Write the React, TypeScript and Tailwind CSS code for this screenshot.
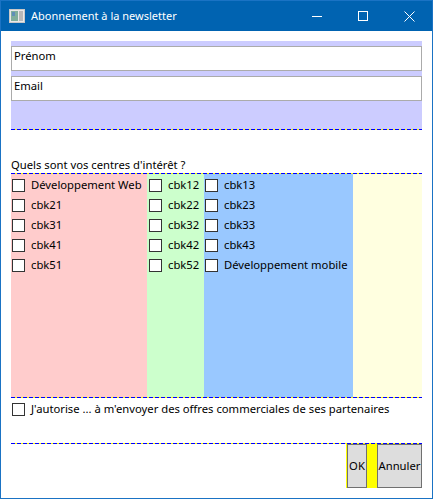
import React from 'react'

const FONT = { fontFamily: '"Noto Sans", "Open Sans", sans-serif' }

const DASH = 'h-px shrink-0 bg-[#ffff00] bg-[linear-gradient(90deg,#0000ff_4px,#ffff00_4px)] bg-[length:6px_1px] bg-repeat-x'

function Box() {
  return <span className="w-[13px] h-[13px] shrink-0 border border-[#333333] bg-white" />
}

function Check({ label }: { label: string }) {
  return (
    <div className="h-[20px] flex items-center gap-[6px] text-[11.25px] text-black whitespace-nowrap">
      <Box />
      <span>{label}</span>
    </div>
  )
}

function TitleBar() {
  return (
    <div className="h-[30px] bg-[#0063b1] flex items-center text-white shrink-0">
      <svg width="16" height="14" viewBox="0 0 16 14" className="ml-[8px] mr-[6px]">
        <rect x="0.5" y="0.5" width="15" height="13" fill="#e8e8e8" stroke="#c8c8c8" />
        <rect x="2" y="2" width="7" height="10" fill="#7fae9c" />
        <rect x="3" y="3" width="3" height="4" fill="#5f8fb8" />
        <rect x="10" y="2" width="4" height="10" fill="#b8b8b8" />
      </svg>
      <span className="text-[11px] flex-1">Abonnement à la newsletter</span>
      <div className="w-[46px] h-full flex items-center justify-center">
        <span className="w-[10px] h-px bg-white" />
      </div>
      <div className="w-[46px] h-full flex items-center justify-center">
        <span className="w-[10px] h-[10px] border border-white" />
      </div>
      <div className="w-[46px] h-full flex items-center justify-center">
        <svg width="11" height="11" viewBox="0 0 11 11">
          <path d="M0.5 0.5 L10.5 10.5 M10.5 0.5 L0.5 10.5" stroke="white" strokeWidth="1" />
        </svg>
      </div>
    </div>
  )
}

function TextBox({ placeholder }: { placeholder: string }) {
  return (
    <div className="h-[25px] bg-white border border-[#ababab] px-[2px] pt-px text-[11.25px] leading-[16px] text-black">
      {placeholder}
    </div>
  )
}

export default function App() {
  return (
    <div style={FONT} className="w-[433px] h-[499px] border border-[#1a73c4] bg-white flex flex-col overflow-hidden">
      <TitleBar />
      <div className="flex-1 flex flex-col px-[10px] pt-[10px]">
        <div className="bg-[#ccccff] h-[88px] pt-[5px] flex flex-col gap-[5px]">
          <TextBox placeholder="Prénom" />
          <TextBox placeholder="Email" />
        </div>
        <div className={DASH} />

        <div className="h-[43px] flex items-end">
          <span className="text-[11.25px] leading-[16px] text-black">Quels sont vos centres d'intérêt ?</span>
        </div>
        <div className={DASH} />

        <div className="h-[223px] flex">
          <div className="w-[136px] bg-[#ffcccc] pl-[1px] pt-[1px]">
            <Check label="Développement Web" />
            <Check label="cbk21" />
            <Check label="cbk31" />
            <Check label="cbk41" />
            <Check label="cbk51" />
          </div>
          <div className="w-[57px] bg-[#ccffcc] pl-[2px] pt-[1px]">
            <Check label="cbk12" />
            <Check label="cbk22" />
            <Check label="cbk32" />
            <Check label="cbk42" />
            <Check label="cbk52" />
          </div>
          <div className="w-[149px] bg-[#99c8ff] pl-[1px] pt-[1px]">
            <Check label="cbk13" />
            <Check label="cbk23" />
            <Check label="cbk33" />
            <Check label="cbk43" />
            <Check label="Développement mobile" />
          </div>
          <div className="flex-1 bg-[#ffffe0]" />
        </div>
        <div className={DASH} />

        <div className="pl-[1px] pt-[1px] h-[45px]">
          <Check label="J'autorise ... à m'envoyer des offres commerciales de ses partenaires" />
        </div>
        <div className={DASH} />

        <div className="flex justify-end">
          <div className="bg-[#ffff00] h-[44px] pl-[1px] flex gap-[10px]">
            <button className="w-[20px] h-full bg-[#dddddd] border border-[#707070] text-[11.25px] text-black flex items-center justify-center">
              OK
            </button>
            <button className="w-[45px] h-full bg-[#dddddd] border border-[#707070] text-[11.25px] text-black flex items-center justify-center">
              Annuler
            </button>
          </div>
        </div>
      </div>
    </div>
  )
}
